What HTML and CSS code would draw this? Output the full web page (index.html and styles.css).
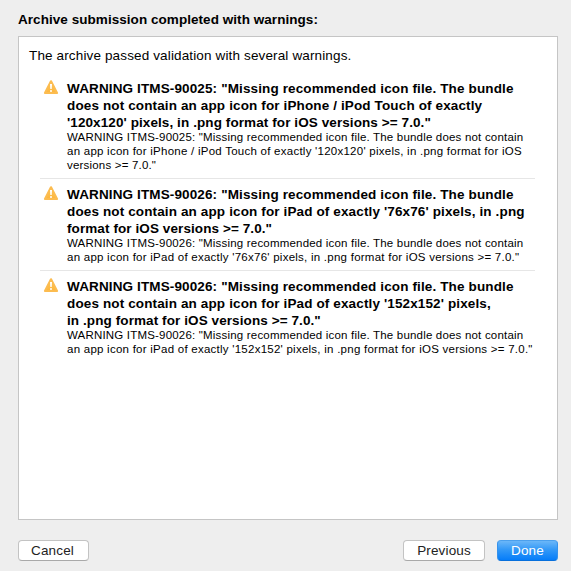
FILE: index.html
```
<!DOCTYPE html>
<html lang="en">
<head>
<meta charset="utf-8">
<title>Archive submission</title>
<link rel="stylesheet" href="styles.css">
</head>
<body>
<svg class="defs" width="0" height="0" aria-hidden="true">
  <defs>
    <linearGradient id="amber" x1="0" y1="0" x2="0" y2="1"><stop offset="0" stop-color="#fdc85c"/><stop offset="1" stop-color="#fdb53b"/></linearGradient>
    <symbol id="warning" viewBox="0 0 16 16">
      <path d="M8 2.3 14 14H2Z" fill="url(#amber)" stroke="#fcbc50" stroke-width="2.2" stroke-linejoin="round"/>
      <path d="M7 5h2l-.3 5H7.3Z" fill="#fff"/>
      <circle cx="8" cy="12" r="1" fill="#fff"/>
    </symbol>
  </defs>
</svg>
<main class="dialog">
  <h1 class="title">Archive submission completed with warnings:</h1>
  <section class="panel">
    <p class="intro">The archive passed validation with several warnings.</p>
    <ul class="list">
      <li class="item">
        <svg class="icon"><use href="#warning"/></svg>
        <div>
          <h2 class="heading">WARNING ITMS-90025: "Missing recommended icon file. The bundle<br>does not contain an app icon for iPhone / iPod Touch of exactly<br><span class="tight">'120x120' pixels, in .png format for iOS versions &gt;= 7.0."</span></h2>
          <p class="detail">WARNING ITMS-90025: "Missing recommended icon file. The bundle does not contain<br><span class="loose">an app icon for iPhone / iPod Touch of exactly '120x120' pixels, in .png format for iOS</span><br>versions &gt;= 7.0."</p>
        </div>
      </li>
      <li class="item">
        <svg class="icon"><use href="#warning"/></svg>
        <div>
          <h2 class="heading">WARNING ITMS-90026: "Missing recommended icon file. The bundle<br>does not contain an app icon for iPad of exactly '76x76' pixels, in .png<br><span class="tight">format for iOS versions &gt;= 7.0."</span></h2>
          <p class="detail">WARNING ITMS-90026: "Missing recommended icon file. The bundle does not contain<br><span class="loose">an app icon for iPad of exactly '76x76' pixels, in .png format for iOS versions &gt;= 7.0."</span></p>
        </div>
      </li>
      <li class="item">
        <svg class="icon"><use href="#warning"/></svg>
        <div>
          <h2 class="heading">WARNING ITMS-90026: "Missing recommended icon file. The bundle<br>does not contain an app icon for iPad of exactly '152x152' pixels,<br><span class="tight">in .png format for iOS versions &gt;= 7.0."</span></h2>
          <p class="detail">WARNING ITMS-90026: "Missing recommended icon file. The bundle does not contain<br><span class="loose">an app icon for iPad of exactly '152x152' pixels, in .png format for iOS versions &gt;= 7.0."</span></p>
        </div>
      </li>
    </ul>
  </section>
  <footer class="actions">
    <button class="button cancel">Cancel</button>
    <button class="button previous">Previous</button>
    <button class="button done">Done</button>
  </footer>
</main>
</body>
</html>
```
FILE: styles.css
```
* { box-sizing: border-box; margin: 0; padding: 0; }
body { background: #eee; color: #000; font-family: "Liberation Sans", Arial, sans-serif; font-size: 13px; overflow: hidden; }
.defs { display: block; height: 0; }
.dialog { height: 571px; padding: 11px 13px 9px 18px; display: flex; flex-direction: column; }
.title { font-size: 13.5px; line-height: 17px; margin-bottom: 8px; letter-spacing: .05px; white-space: nowrap; }
.panel { height: 484px; width: 540px; background: #fff; border: 1px solid #c5c5c5; padding: 10px 22px 0 10px; }
.intro { font-size: 13.5px; line-height: 17px; letter-spacing: .14px; }
.list { list-style: none; margin: 9px 0 0 11px; }
.item { display: flex; gap: 8px; padding: 7px 0 6px 3px; white-space: nowrap; }
.item:not(:last-child) { border-bottom: 1px solid #e6e6e6; }
.icon { width: 16px; height: 16px; flex: none; margin-top: -1px; }
.heading { font-size: 13.5px; line-height: 17px; letter-spacing: .13px; }
.tight { letter-spacing: .09px; }
.detail { font-size: 11.5px; line-height: 14px; letter-spacing: .19px; margin-top: -1px; }
.loose { letter-spacing: .25px; }
.actions { display: flex; margin-top: 20px; }
.button { height: 21px; border: 1px solid #c3c3c3; border-bottom-color: #a9a9a9; border-radius: 4px; background: #fff; color: #222; font: 13.5px/18px "Liberation Sans", Arial, sans-serif; letter-spacing: .15px; }
.cancel { width: 71px; padding-right: 2px; }
.previous { width: 82px; margin-left: auto; margin-right: 12px; }
.done { width: 61px; color: #fff; border-color: #4ba0ed #3592ec #0870dc; background: linear-gradient(#6bb7f8, #3399f7 45%, #067df9); }
```
